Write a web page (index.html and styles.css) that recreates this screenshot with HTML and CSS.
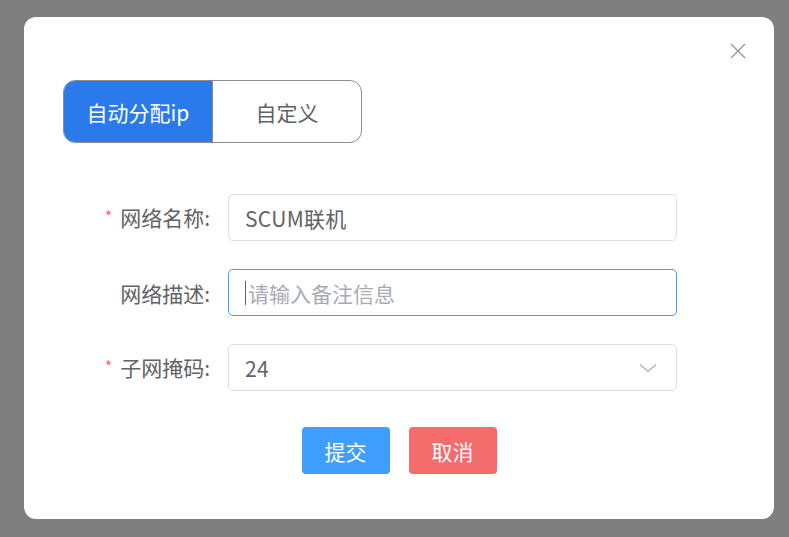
FILE: index.html
```html
<!DOCTYPE html>
<html lang="zh">
<head>
<meta charset="utf-8">
<link rel="stylesheet" href="styles.css">
</head>
<body>
<div class="dialog">
  <button class="close" aria-label="关闭">
    <svg width="16" height="16" viewBox="0 0 16 16"><path d="M1 1L15 15M15 1L1 15" stroke="#909399" stroke-width="1.3" fill="none"/></svg>
  </button>
  <div class="segmented">
    <div class="seg seg-active">自动分配ip</div>
    <div class="seg">自定义</div>
  </div>
  <div class="form">
    <div class="row">
      <div class="label"><span class="req">*</span>网络名称:</div>
      <div class="field"><span class="value">SCUM联机</span></div>
    </div>
    <div class="row">
      <div class="label">网络描述:</div>
      <div class="field field-focus"><span class="caret"></span><span class="placeholder">请输入备注信息</span></div>
    </div>
    <div class="row">
      <div class="label"><span class="req">*</span>子网掩码:</div>
      <div class="field field-select"><span class="value">24</span>
        <svg class="chev" width="18" height="10" viewBox="0 0 18 10"><path d="M1 1.5L9 8.5L17 1.5" stroke="#a8abb2" stroke-width="1.2" fill="none"/></svg>
      </div>
    </div>
  </div>
  <div class="actions">
    <button class="btn btn-primary">提交</button>
    <button class="btn btn-danger">取消</button>
  </div>
</div>
</body>
</html>
```
FILE: styles.css
```css
* { box-sizing: border-box; }
html, body { margin: 0; padding: 0; }
body {
  background: #7f7f7f;
  width: 789px;
  height: 537px;
  overflow: hidden;
  font-family: "Noto Sans CJK SC", "Noto Sans", sans-serif;
}
.dialog {
  position: relative;
  margin: 17px 0 0 24px;
  width: 750px;
  height: 502px;
  background: #fff;
  border-radius: 12px;
  padding-top: 63px;
}
.close {
  position: absolute;
  top: 26px;
  right: 28px;
  width: 16px;
  height: 16px;
  padding: 0;
  border: 0;
  background: none;
  display: flex;
}
.segmented {
  margin-left: 39px;
  width: 299px;
  height: 63px;
  display: flex;
  border: 1px solid #8c8c8c;
  border-radius: 12px;
  overflow: hidden;
}
.seg {
  flex: 1;
  display: flex;
  align-items: center;
  justify-content: center;
  font-size: 21px;
  color: #606266;
}
.seg-active {
  background: #2a7aeb;
  color: #fff;
  border-right: 1px solid #8c8c8c;
}
.form {
  margin-top: 51px;
  display: flex;
  flex-direction: column;
  gap: 28px;
}
.row {
  display: flex;
  align-items: center;
  height: 47px;
}
.label {
  width: 186px;
  margin-right: 18px;
  text-align: right;
  font-size: 21px;
  color: #606266;
  line-height: 26px;
}
.req {
  color: #f56c6c;
  font-size: 16px;
  margin-right: 8px;
  position: relative;
  top: -3px;
}
.field {
  width: 449px;
  height: 47px;
  border: 1px solid #dcdfe6;
  border-radius: 5px;
  display: flex;
  align-items: center;
  padding-left: 16px;
  font-size: 21px;
  color: #606266;
}
.value { letter-spacing: 0.3px; }
.field-focus { border-color: #409eff; }
.caret {
  width: 1px;
  height: 24px;
  background: #606266;
  margin-right: 2px;
}
.placeholder { color: #a8abb2; }
.field-select { justify-content: space-between; padding-right: 19px; }
.chev { display: block; }
.actions {
  margin-top: 36px;
  display: flex;
  justify-content: center;
  gap: 19px;
}
.btn {
  width: 88px;
  height: 47px;
  border: 0;
  border-radius: 4px;
  color: #fff;
  font-size: 21px;
  font-family: "Noto Sans CJK SC", sans-serif;
  padding: 0;
}
.btn-primary { background: #409eff; }
.btn-danger { background: #f56c6c; }
```
